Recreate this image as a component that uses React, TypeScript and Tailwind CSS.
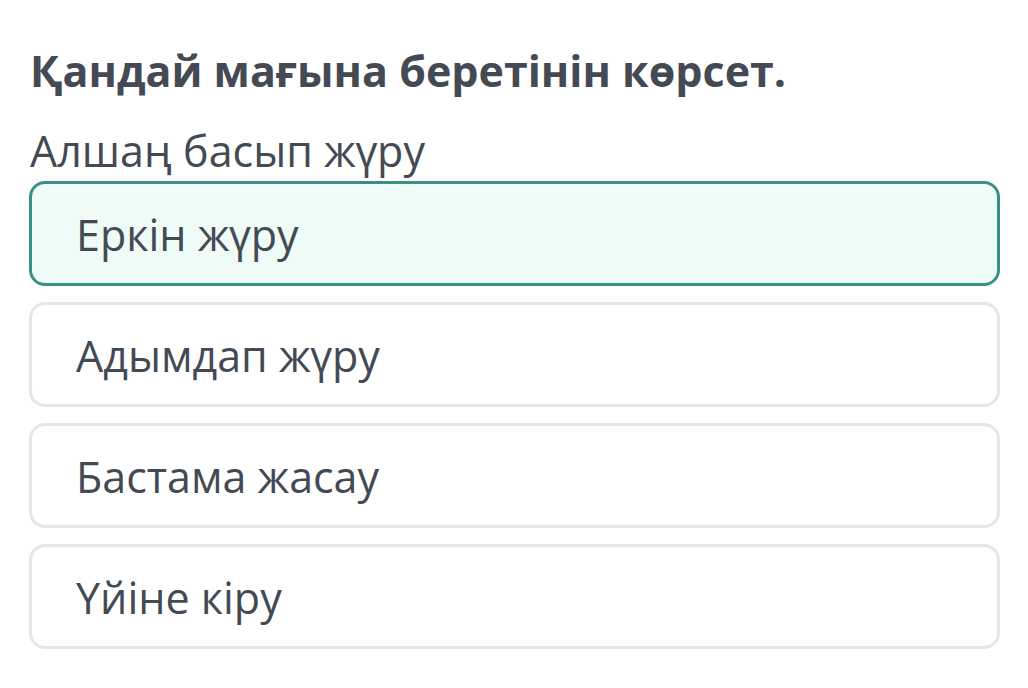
export default function App() {
  const opts = ["Еркін жүру", "Адымдап жүру", "Бастама жасау", "Үйіне кіру"];
  return (
    <div className="w-[1028px] h-[688px] bg-white overflow-hidden text-[#434a54]" style={{ fontFamily: '"Open Sans", sans-serif' }}>
      <div className="pl-[29px] pr-[28px] pt-[43px]">
        <h1 className="text-[43px] font-bold leading-[56px] pl-[1px]">Қандай мағына беретінін көрсет.</h1>
        <div className="mt-[26px] text-[43px] leading-[52px] pl-[1px]">Алшаң басып жүру</div>
        <div className="mt-[4px] flex flex-col gap-[16px]">
          {opts.map((o, i) => (
            <div
              key={o}
              className={
                i === 0
                  ? "h-[105px] rounded-[16px] border-[3px] border-[#3c8f84] bg-[#effbf6] flex items-center pl-[44px] pt-[3px] text-[43px]"
                  : "h-[105px] rounded-[16px] border-[3px] border-[#e4e6e8] bg-white flex items-center pl-[44px] pt-[3px] text-[43px]"
              }
            >
              {o}
            </div>
          ))}
        </div>
      </div>
    </div>
  );
}
